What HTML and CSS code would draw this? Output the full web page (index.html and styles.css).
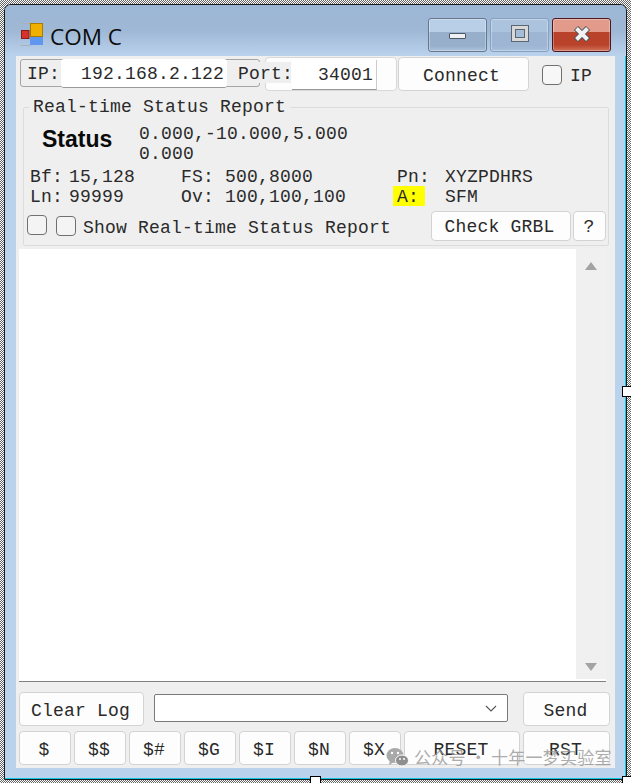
FILE: index.html
```html
<!DOCTYPE html>
<html lang="en">
<head>
<meta charset="utf-8">
<title>COM C</title>
<link rel="stylesheet" href="styles.css">
</head>
<body>
<div class="stage">
  <div class="window">
    <header class="titlebar">
      <svg class="app-icon" width="24" height="24" viewBox="0 0 24 24">
        <path d="M.5.5h10v22H.5M.5 11h10" fill="none" stroke="#a9b1bb"/>
        <rect x="1.500" y="7.500" width="7.500" height="8" fill="#d8322a" stroke="#8a1f1a"/>
        <rect x="10.500" y=".5" width="12" height="13" fill="#efb000" stroke="#a97c00"/>
        <rect x="10" y="14" width="13" height="8" fill="#5f97ee"/>
      </svg>
      <span class="title">COM C</span>
      <div class="caption">
        <span class="cap cap-min"><i class="min-glyph"></i></span>
        <span class="cap cap-max"><i class="max-glyph"></i></span>
        <span class="cap cap-close">
          <svg width="20" height="18" viewBox="0 0 20 18"><path d="M4 3l12 12M16 3L4 15" fill="none" stroke="#4a4f57" stroke-width="6"/><path d="M4.500 3.500l11 11M15.500 3.500l-11 11" fill="none" stroke="#f2f2f2" stroke-width="4"/></svg>
        </span>
      </div>
    </header>
    <main class="client">
      <div class="conn-row">
        <div class="ip-box">
          <span class="ip-label">IP:</span>
          <span class="ip-input">192.168.2.122</span>
        </div>
        <div class="port-box">
          <span class="port-label">Port:</span>
          <span class="port-input">34001</span>
        </div>
        <button class="btn connect">Connect</button>
        <span class="check ip-check"></span>
        <span class="ip-text">IP</span>
      </div>

      <fieldset class="group">
        <legend>Real-time Status Report</legend>
        <div class="status-row">
          <span class="status">Status</span>
          <div class="coords"><div>0.000,-10.000,5.000</div><div>0.000</div></div>
        </div>
        <div class="info">
          <span>Bf:</span><span>15,128</span><span>FS:</span><span>500,8000</span><span>Pn:</span><span>XYZPDHRS</span>
          <span>Ln:</span><span>99999</span><span>Ov:</span><span>100,100,100</span><span class="alarm">A:</span><span>SFM</span>
        </div>
        <div class="report-row">
          <span class="check"></span>
          <span class="check check-second"></span>
          <span class="report-text">Show Real-time Status Report</span>
          <button class="btn check-grbl">Check GRBL</button>
          <button class="btn help">?</button>
        </div>
      </fieldset>

      <div class="log">
        <div class="scrollbar">
          <svg width="12" height="8" viewBox="0 0 12 8"><path d="M6 0l6 8H0z" fill="#a3a3a3"/></svg>
          <svg width="12" height="8" viewBox="0 0 12 8"><path d="M6 8l6-8H0z" fill="#a3a3a3"/></svg>
        </div>
      </div>

      <div class="send-row">
        <button class="btn clear">Clear Log</button>
        <div class="combo">
          <svg width="12" height="7" viewBox="0 0 12 7"><path d="M1 1l5 5 5-5" fill="none" stroke="#555" stroke-width="1.100"/></svg>
        </div>
        <button class="btn send">Send</button>
      </div>

      <div class="cmd-row">
        <button class="btn cmd">$</button>
        <button class="btn cmd">$$</button>
        <button class="btn cmd">$#</button>
        <button class="btn cmd">$G</button>
        <button class="btn cmd">$I</button>
        <button class="btn cmd">$N</button>
        <button class="btn cmd">$X</button>
        <button class="btn reset">RESET</button>
        <button class="btn rst">RST</button>
      </div>
    </main>
  </div>

  <i class="handle handle-right"></i>
  <i class="handle handle-bottom"></i>
  <i class="handle handle-corner"></i>

  <div class="watermark">
    <svg width="23" height="20" viewBox="0 0 23 20">
      <ellipse cx="9" cy="8.500" rx="8.500" ry="7.500" fill="#a9a9a9"/>
      <path d="M4 13l-1 5 5-3z" fill="#a9a9a9"/>
      <ellipse cx="16" cy="13.500" rx="6.500" ry="5.500" fill="#8f8f8f" stroke="#fff"/>
      <circle cx="6" cy="6" r="1.200" fill="#fff"/><circle cx="12" cy="6" r="1.200" fill="#fff"/>
      <circle cx="14" cy="12" r="1" fill="#fff"/><circle cx="18" cy="12" r="1" fill="#fff"/>
    </svg>
    <span>公众号 · 十年一梦实验室</span>
  </div>
</div>
</body>
</html>
```
FILE: styles.css
```css
* { box-sizing: border-box; }
html, body { margin: 0; padding: 0; }
body { width: 631px; height: 783px; overflow: hidden; }

.stage {
  position: relative;
  width: 631px;
  height: 783px;
  padding: 4px;
  background-color: #fff;
  background-image: repeating-conic-gradient(#666 0 25%, #fff 0 50%);
  background-size: 2px 2px;
  font-family: "Liberation Mono", monospace;
  font-size: 18px;
  letter-spacing: .2px;
  color: #2a2a2a;
}

.window {
  width: 623px;
  height: 776px;
  display: flex;
  flex-direction: column;
  border: 1px solid #1c1c1c;
  border-radius: 7px 7px 0 0;
  background: #bad2ec;
  box-shadow: inset -1px -1px 0 #11c6e6;
  overflow: hidden;
}

.titlebar {
  height: 51px;
  flex: none;
  display: flex;
  align-items: flex-start;
  padding: 13px 15px 0 15px;
  background: linear-gradient(#9cb6d5 0, #9fb8d6 26px, #bad2ec 51px);
}
.app-icon { margin-top: 5px; }
.title {
  font-family: "Open Sans", sans-serif;
  font-size: 22.500px;
  letter-spacing: 0;
  line-height: 30px;
  margin: 4px 0 0 6px;
  color: #0c0c0c;
}
.caption { margin-left: auto; display: flex; gap: 3px; }
.cap {
  width: 59px;
  height: 34px;
  display: flex;
  align-items: center;
  justify-content: center;
  border-radius: 3px;
  border: 1px solid #66788f;
  box-shadow: inset 0 0 0 1px rgba(255,255,255,.3);
  background: linear-gradient(#b9cfe7 0 13px, #98afcb 13px 27px, #b4cbe5 34px);
}
.cap-max {
  border-color: #86a0c0;
  background: linear-gradient(#acc3de 0 13px, #9eb6d3 13px 27px, #aec5e0 34px);
}
.cap-close {
  border-color: #4d1720;
  background: linear-gradient(#e29a8a 0 13px, #b9432a 13px 26px, #d87f6a 34px);
}
.min-glyph {
  width: 17px; height: 6px; margin-top: 2px;
  background: #eef0f3; border: 1px solid #4d5866; border-radius: 1px;
}
.max-glyph {
  width: 16px; height: 15px; margin-top: -3px;
  background: #a6bdd9; border: 3px solid #d8d8d8;
  outline: 1px solid #5b6674; outline-offset: 0;
  box-shadow: inset 0 0 0 1px #5b6674;
}
.cap-close svg { margin-top: -3px; }

.client {
  flex: 1;
  margin: 0 11px 11px;
  padding: 1px 4px 2px 3px;
  background: #efefef;
  display: flex;
  flex-direction: column;
}

.btn {
  font: inherit;
  letter-spacing: inherit;
  color: inherit;
  padding: 4px 2px 0 0;
  background: #fdfdfd;
  border: 1px solid #d3d3d3;
  border-radius: 4px;
}

.conn-row {
  height: 34px;
  flex: none;
  display: flex;
  align-items: flex-start;
  padding-left: 1px;
}
.ip-box {
  width: 240px;
  height: 28px;
  margin-top: 2px;
  display: flex;
  border: 1px solid #a5a5a5;
  border-radius: 3px;
}
.ip-label { width: 40px; padding-left: 6px; line-height: 29px; }
.ip-input {
  width: 166px;
  height: 29px;
  margin-top: -1px;
  text-align: right;
  padding-right: 3px;
  line-height: 30px;
  background: #fff;
  border-bottom: 1px solid #999;
  border-radius: 3px;
}
.port-box {
  position: relative;
  width: 132px;
  height: 34px;
  margin-left: 5px;
  padding: 2px 0 0 26px;
  background: #fdfdfd;
  border: 1px solid #d8d8d8;
  border-radius: 4px;
}
.port-label {
  position: absolute;
  left: -32px;
  top: 4px;
  width: 57px;
  height: 21px;
  padding-left: 4px;
  line-height: 25px;
  background: #efefef;
}
.port-input {
  display: block;
  width: 85px;
  height: 30px;
  padding-right: 3px;
  text-align: right;
  line-height: 30px;
  background: #fff;
  border-right: 1px solid #ccc;
  border-bottom: 1px solid #999;
}
.connect { width: 131px; height: 34px; margin-left: 1px; padding-right: 4px; }
.check {
  flex: none;
  width: 20px;
  height: 20px;
  border: 1px solid #707070;
  border-radius: 4px;
  background: #f7f7f7;
}
.ip-check { margin: 8px 0 0 13px; }
.ip-text { margin: 8px 0 0 8px; line-height: 22px; }

.group {
  width: 586px;
  height: 149px;
  flex: none;
  min-width: 0;
  margin: 6px 0 0 4px;
  padding: 6px 0 0;
  border: 1px solid #dcdcdc;
  border-radius: 2px;
}
.group legend {
  margin-left: 5px;
  padding: 0 4px;
  height: 20px;
  line-height: 21px;
}
.status-row { height: 40px; display: flex; line-height: 20px; }
.status {
  width: 97px;
  margin-left: 18px;
  font-family: "Liberation Sans", sans-serif;
  font-size: 23px;
  font-weight: 700;
  letter-spacing: 0;
  color: #0a0a0a;
  line-height: 32px;
}
.coords { margin-top: 1px; }
.info {
  display: grid;
  grid-template-columns: 39px 112px 44px 172px 48px 1fr;
  grid-auto-rows: 20px;
  margin-top: 3px;
  padding-left: 6px;
  line-height: 22px;
}
.alarm {
  margin-left: -4px;
  width: 32px;
  padding-left: 4px;
  background: #ffff00;
}
.report-row {
  display: flex;
  align-items: center;
  height: 30px;
  margin-top: 5px;
  padding-left: 3px;
}
.report-row .check { background: #f4f4f4; margin: -3px 9px 0 0; }
.report-row .check-second { margin: -1px 7px 0 0; }
.report-text { padding-top: 4px; }
.check-grbl { width: 140px; height: 30px; margin-left: auto; padding: 2px 3px 0 0; }
.help { width: 33px; height: 30px; margin: 0 2px; padding: 2px 1px 0 0; }

.log {
  width: 587px;
  height: 433px;
  flex: none;
  margin-top: 3px;
  display: flex;
  justify-content: flex-end;
  background: #fff;
  border-bottom: 1px solid #808080;
}
.scrollbar {
  width: 30px;
  height: 430px;
  padding: 13px 0 8px;
  display: flex;
  flex-direction: column;
  align-items: center;
  justify-content: space-between;
  background: #f0f0f0;
}

.send-row {
  display: flex;
  height: 34px;
  flex: none;
  margin-top: 10px;
}
.clear { width: 125px; }
.combo {
  width: 354px;
  height: 28px;
  margin: 2px 0 0 10px;
  display: flex;
  align-items: center;
  justify-content: flex-end;
  padding-right: 10px;
  background: #fff;
  border: 1px solid #7a7a7a;
  border-radius: 2px;
}
.send { width: 87px; margin-left: 15px; }

.cmd-row {
  display: flex;
  gap: 3px;
  height: 34px;
  flex: none;
  margin-top: 5px;
}
.cmd { width: 52px; }
.reset { width: 116px; }
.rst { width: 87px; }

.handle {
  position: absolute;
  background: #fff;
  border: 1px solid #000;
}
.handle-right { left: 622px; top: 386px; width: 12px; height: 11px; }
.handle-bottom { left: 310px; top: 776px; width: 11px; height: 11px; }
.handle-corner { left: 622px; top: 776px; width: 12px; height: 11px; }

.watermark {
  position: absolute;
  left: 386px;
  top: 745px;
  display: flex;
  align-items: center;
  gap: 5px;
  font-family: "Noto Sans CJK SC", sans-serif;
  font-size: 17px;
  letter-spacing: .25px;
  line-height: 24px;
  color: rgba(150,150,150,.8);
  white-space: nowrap;
}
```
